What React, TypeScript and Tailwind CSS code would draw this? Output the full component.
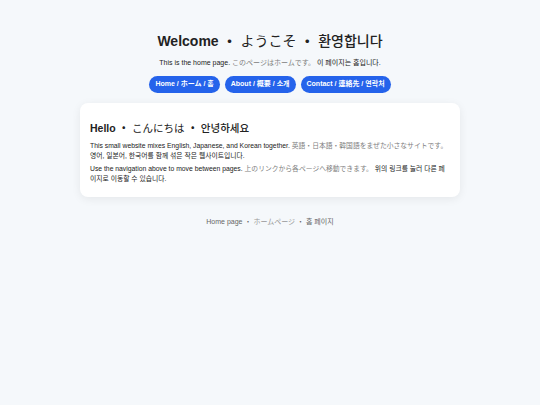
import React from "react";

const jp = "font-['Noto_Sans_CJK_JP',sans-serif] text-[#808080]";

export default function App() {
  return (
    <div className="min-h-[405px] bg-[#f5f8fb] font-['Liberation_Sans','Noto_Sans_CJK_KR',sans-serif] text-[#222] flex flex-col items-center pt-[32px]">
      <h1 className="text-[14px] leading-[17px] font-bold">
        Welcome ・ <span className="font-['Noto_Sans_CJK_JP',sans-serif] font-normal">ようこそ</span> ・ <span className="font-['Noto_Sans_CJK_KR',sans-serif] font-medium">환영합니다</span>
      </h1>
      <p className="mt-[8px] text-[7px] leading-[9px]">
        This is the home page. <span className={jp}>このページはホームです。</span> 이 페이지는 홈입니다.
      </p>
      <nav className="mt-[9px] flex gap-[5px]">
        <a className="h-[17px] px-[6px] rounded-full bg-[#2563eb] text-white text-[7px] font-bold flex items-center">Home / ホーム / 홈</a>
        <a className="h-[17px] px-[6px] rounded-full bg-[#2563eb] text-white text-[7px] font-bold flex items-center">About / 概要 / 소개</a>
        <a className="h-[17px] px-[6px] rounded-full bg-[#2563eb] text-white text-[7px] font-bold flex items-center">Contact / 連絡先 / 연락처</a>
      </nav>
      <main className="mt-[10px] w-[380px] bg-white rounded-[8px] shadow-[0_2px_10px_rgba(0,0,0,0.07)] px-[10px] pt-[18px] pb-[14px]">
        <h2 className="text-[10.5px] leading-[13px] font-bold">
          Hello ・ <span className="font-['Noto_Sans_CJK_JP',sans-serif] font-normal">こんにちは</span> ・ <span className="font-['Noto_Sans_CJK_KR',sans-serif] font-medium">안녕하세요</span>
        </h2>
        <p className="mt-[6px] text-[6.8px] leading-[9.5px]">
          This small website mixes English, Japanese, and Korean together. <span className={jp}>英語・日本語・韓国語をまぜた小さなサイトです。</span> 영어, 일본어, 한국어를 함께 섞은 작은 웹사이트입니다.
        </p>
        <p className="mt-[4px] text-[6.8px] leading-[9.5px]">
          Use the navigation above to move between pages. <span className={jp}>上のリンクから各ページへ移動できます。</span> 위의 링크를 눌러 다른 페이지로 이동할 수 있습니다.
        </p>
      </main>
      <footer className="mt-[20px] text-[7px] leading-[9px] text-[#666]">
        Home page ・ <span className="text-[#999]">ホームページ</span> ・ 홈 페이지
      </footer>
    </div>
  );
}
